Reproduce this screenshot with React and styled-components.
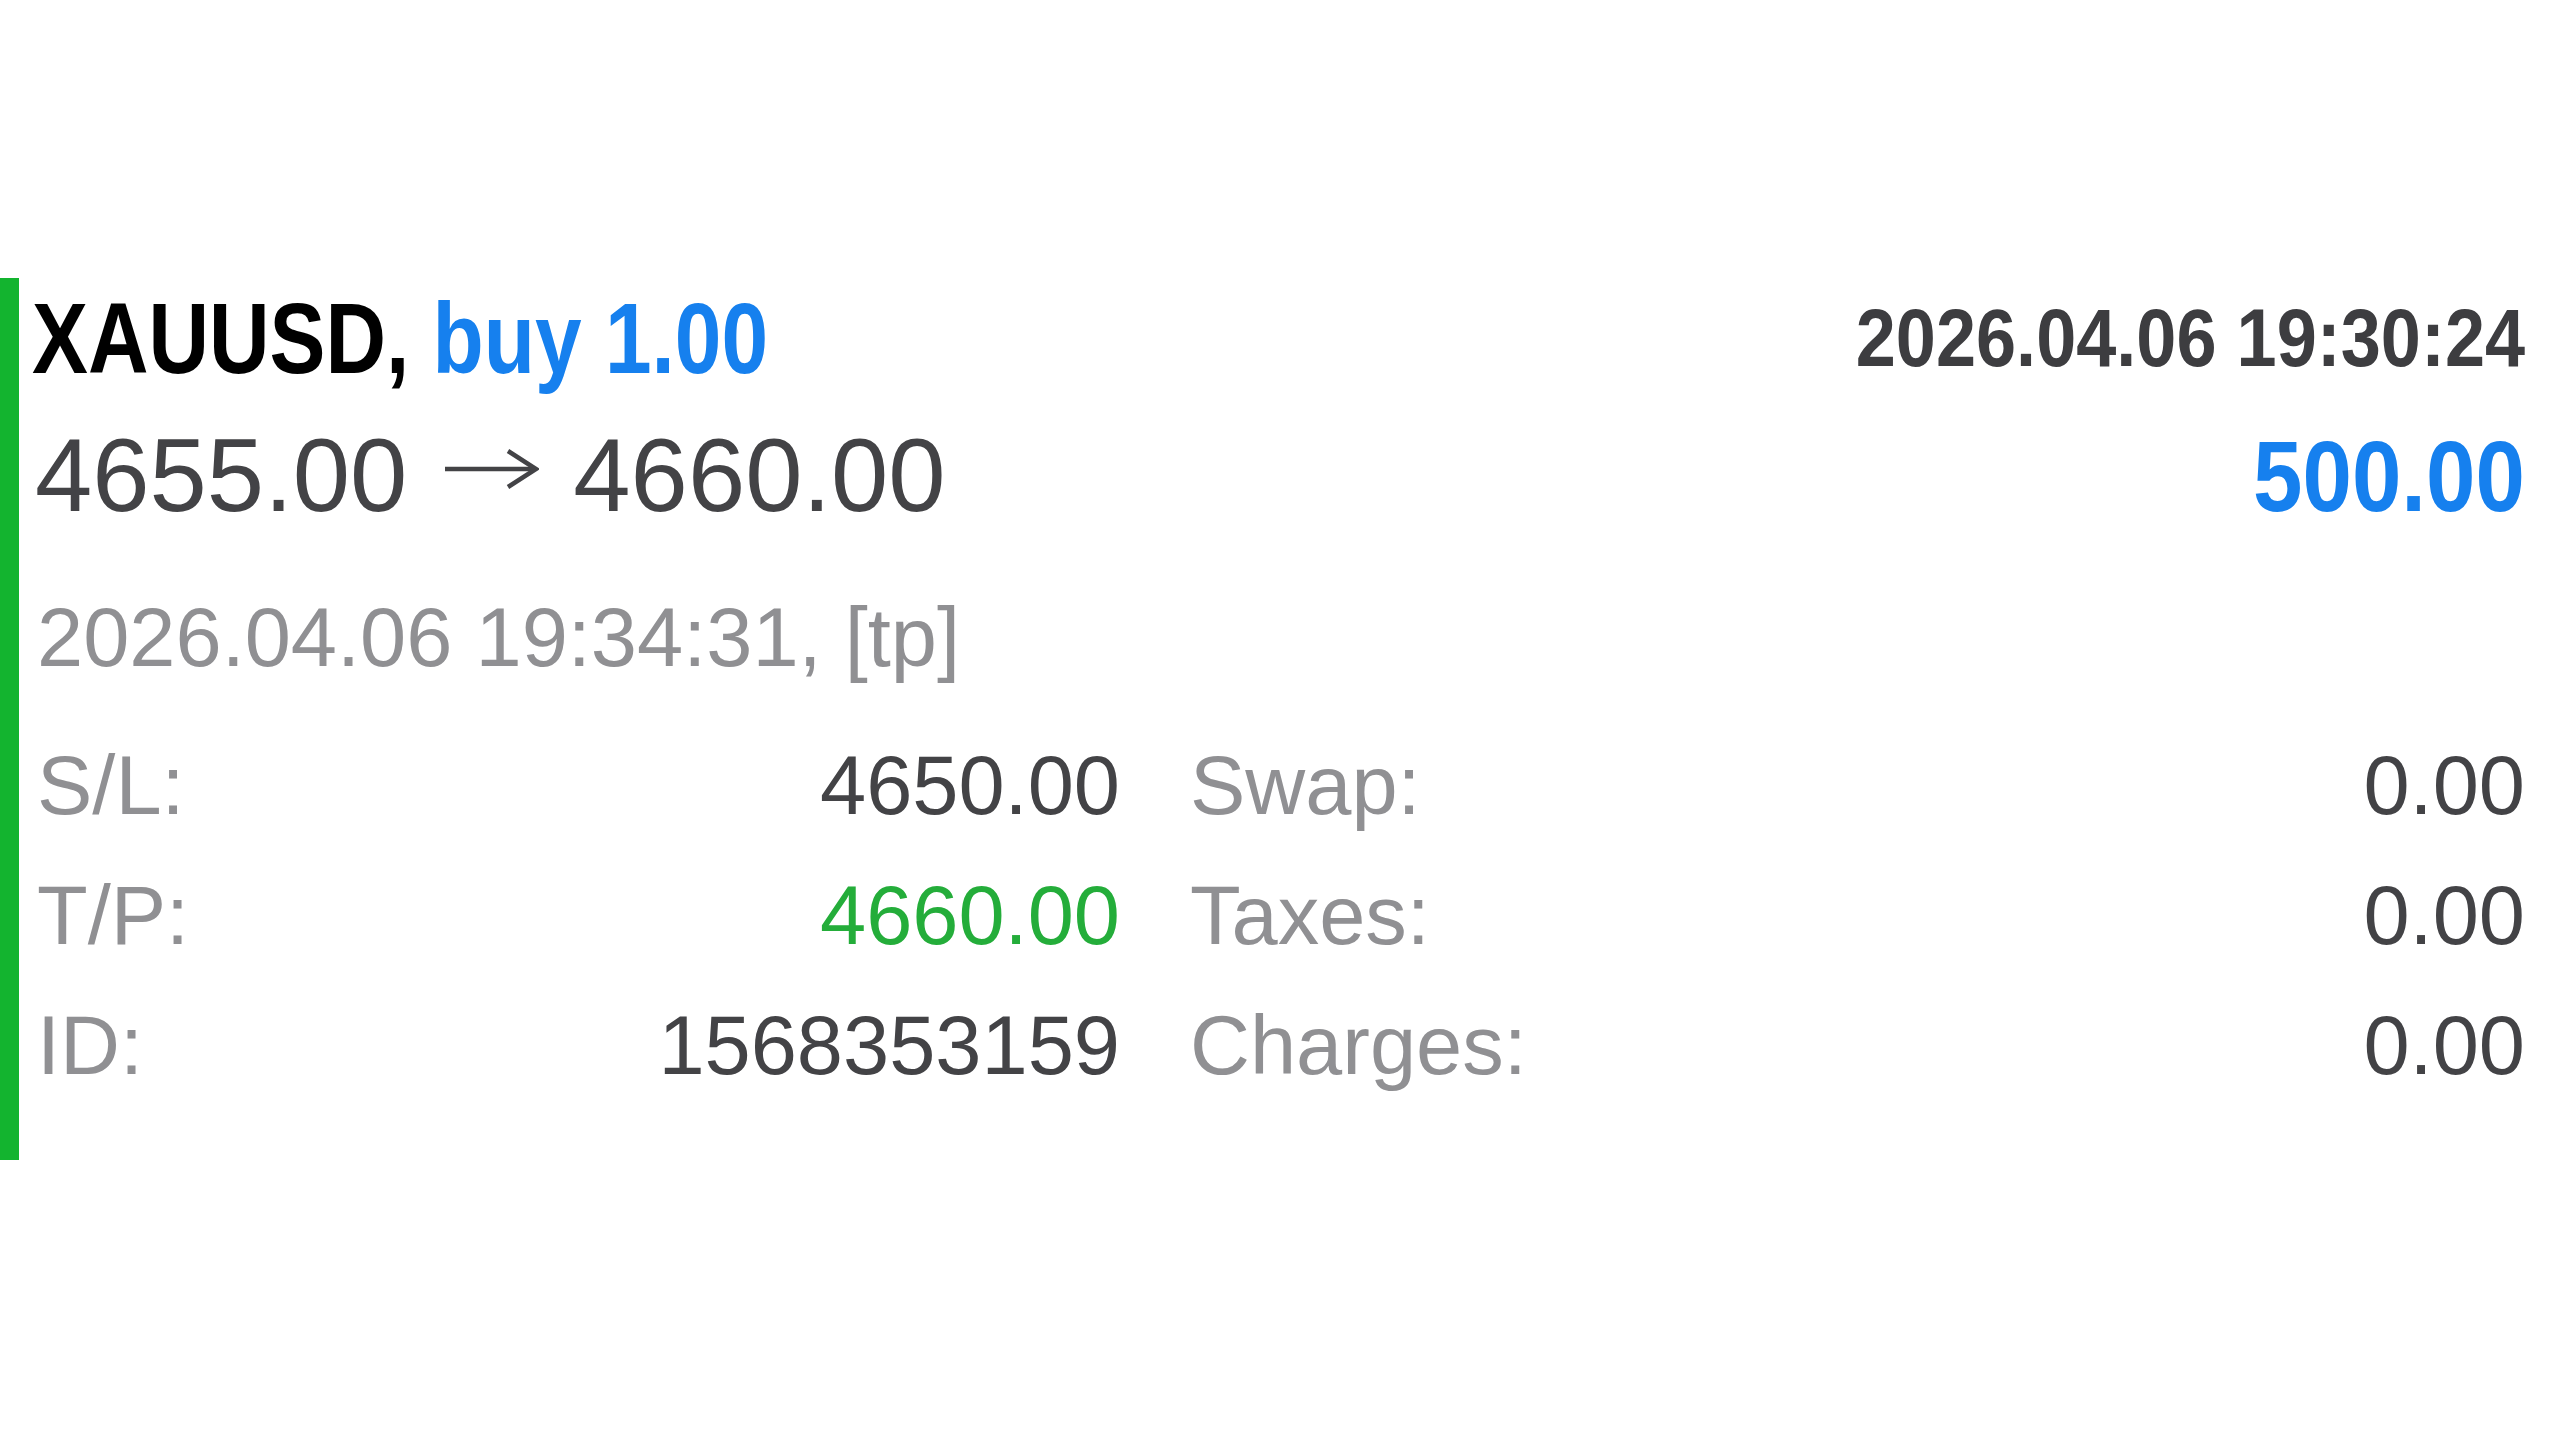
import React from "react";
import styled, { createGlobalStyle } from "styled-components";

const Global = createGlobalStyle`
  html, body { margin: 0; padding: 0; background: #ffffff; }
  body { font-family: "Liberation Sans", Arial, sans-serif; }
`;

const Page = styled.div`
  width: 2560px;
  height: 1440px;
  padding-top: 278px;
  box-sizing: border-box;
  background: #ffffff;
`;

const Card = styled.section`
  box-sizing: border-box;
  height: 882px;
  border-left: 19px solid #13b42f;
  padding: 0 35px 0 13px;
  display: flex;
  flex-direction: column;
`;

const TopRow = styled.div`
  display: flex;
  justify-content: space-between;
  align-items: flex-start;
  margin-top: ${(p) => p.$mt || 0}px;
`;

/* The reference uses a condensed bold face; no condensed face is installed,
   so the bold headings are narrowed horizontally. */
const Condensed = styled.div`
  display: inline-block;
  font-family: "Liberation Sans", Arial, sans-serif;
  font-weight: 700;
  white-space: nowrap;
  transform: scaleX(${(p) => p.$squeeze});
  transform-origin: ${(p) => (p.$anchor === "right" ? "right" : "left")} center;
`;

const Title = styled(Condensed)`
  font-size: 101px;
  line-height: 120px;
  color: #000000;
`;

const Blue = styled.span`
  color: #1680ee;
`;

const OpenTime = styled(Condensed)`
  font-size: 81px;
  line-height: 120px;
  color: #3d3d40;
`;

const Profit = styled(Condensed)`
  font-size: 101px;
  line-height: 120px;
  color: ${(p) => (p.$positive ? "#1680ee" : "#e0322c")};
`;

const Prices = styled.div`
  padding-left: 3px;
  font-size: 103px;
  line-height: 120px;
  color: #434346;
  white-space: nowrap;
`;

const ArrowIcon = styled.svg`
  width: 94px;
  height: 40px;
  margin: 0 34px 0 38px;
  vertical-align: 22px;
`;

const CloseInfo = styled.div`
  margin-top: 52px;
  padding-left: 5px;
  font-size: 83px;
  line-height: 100px;
  color: #909093;
  white-space: nowrap;
`;

const Details = styled.div`
  margin-top: 33px;
  padding-left: 5px;
  display: grid;
  grid-template-columns: 1083px 1fr;
  column-gap: 70px;
`;

const Pair = styled.div`
  display: flex;
  justify-content: space-between;
  align-items: baseline;
  font-size: 83px;
  line-height: 130px;
  white-space: nowrap;
`;

const Label = styled.span`
  color: #909093;
`;

const Value = styled.span`
  color: ${(p) => p.$color || "#434346"};
`;

const rows = [
  [
    { label: "S/L:", value: "4650.00" },
    { label: "Swap:", value: "0.00" },
  ],
  [
    { label: "T/P:", value: "4660.00", color: "#24ad3a" },
    { label: "Taxes:", value: "0.00" },
  ],
  [
    { label: "ID:", value: "1568353159" },
    { label: "Charges:", value: "0.00" },
  ],
];

function Arrow() {
  return (
    <ArrowIcon viewBox="0 0 94 40" aria-label="→" role="img">
      <g fill="none" stroke="#434346" strokeWidth="4.5" strokeLinecap="butt" strokeLinejoin="miter">
        <line x1="0" y1="20" x2="90" y2="20" />
        <polyline points="63,2 91,20 63,38" />
      </g>
    </ArrowIcon>
  );
}

export default function App() {
  return (
    <>
      <Global />
      <Page>
        <Card>
          <TopRow>
            <Title $squeeze={0.83} $anchor="left">
              XAUUSD, <Blue>buy 1.00</Blue>
            </Title>
            <OpenTime $squeeze={0.89} $anchor="right">
              2026.04.06 19:30:24
            </OpenTime>
          </TopRow>
          <TopRow $mt={18}>
            <Prices>
              4655.00
              <Arrow />
              4660.00
            </Prices>
            <Profit $positive $squeeze={0.88} $anchor="right">
              500.00
            </Profit>
          </TopRow>
          <CloseInfo>2026.04.06 19:34:31, [tp]</CloseInfo>
          <Details>
            {rows.map((row) =>
              row.map((cell) => (
                <Pair key={cell.label}>
                  <Label>{cell.label}</Label>
                  <Value $color={cell.color}>{cell.value}</Value>
                </Pair>
              ))
            )}
          </Details>
        </Card>
      </Page>
    </>
  );
}
